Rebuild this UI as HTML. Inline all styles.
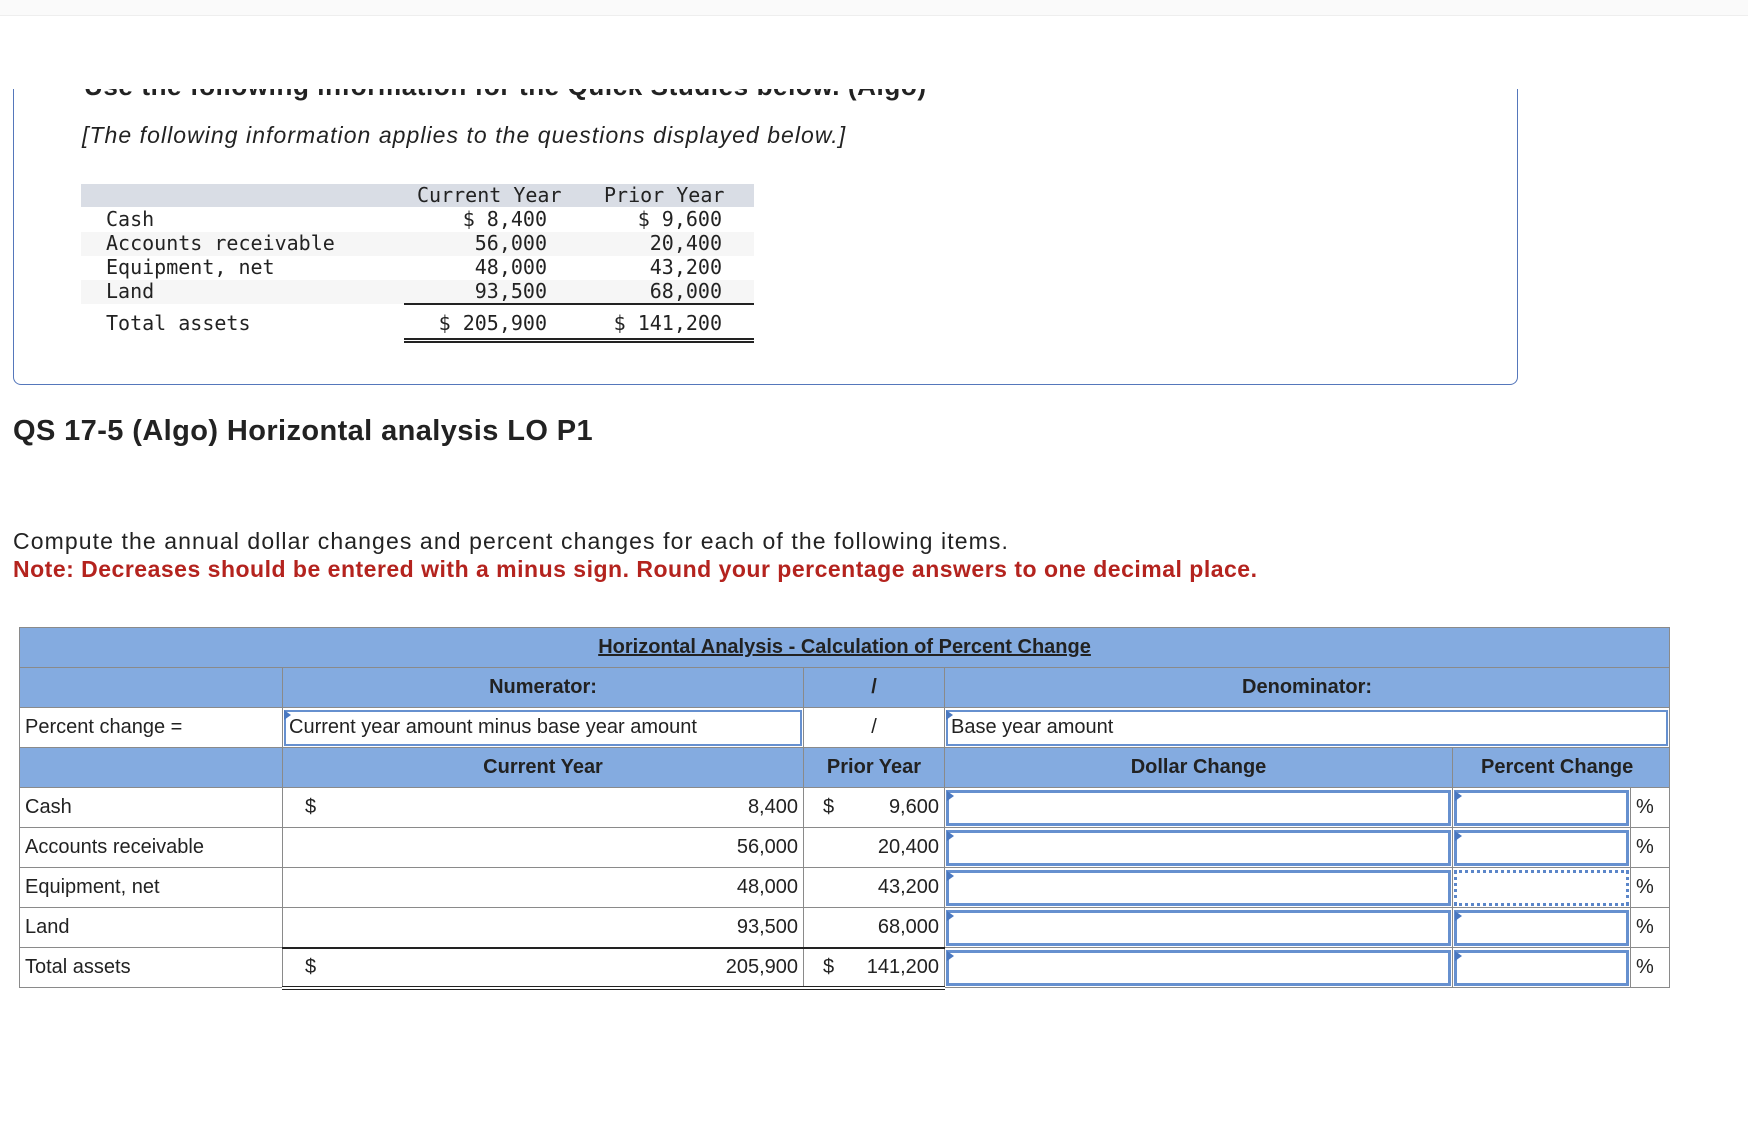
<!DOCTYPE html>
<html><head><meta charset="utf-8"><style>
*{margin:0;padding:0;box-sizing:border-box}
body{width:1748px;height:1134px;background:#fff;position:relative;overflow:hidden;font-family:"Liberation Sans",Arial,sans-serif;color:#222}
.abs{position:absolute;white-space:nowrap}
.mono{font-family:"DejaVu Sans Mono","Liberation Mono",monospace;font-size:20px;color:#222}
table.h{position:absolute;left:19px;top:627px;border-collapse:collapse;table-layout:fixed;width:1650px;font-size:20px}
table.h td{border:1px solid #8a8a8a;height:40px;padding:0 5px;white-space:nowrap;position:relative}
.b{background:#84abe0;font-weight:bold;text-align:center}
.r{text-align:right}
.inp{position:absolute;left:1px;right:1px;top:2px;bottom:1px;border:3px solid #6690cf;background:#fff}
.inp:before{content:"";position:absolute;left:-2px;top:-2px;border-left:7px solid #4a78c0;border-top:5px solid transparent;border-bottom:5px solid transparent}
.dot{position:absolute;left:1px;right:1px;top:2px;bottom:1px;border:3px dotted #5b86c9}
</style></head><body>
<div class="abs" style="left:0;top:0;width:1748px;height:16px;background:#fafafa;border-bottom:1px solid #eee"></div>
<div class="abs" style="left:13px;top:89px;width:1505px;height:296px;border:1px solid #5577bb;border-top:none;border-radius:0 0 8px 8px;overflow:hidden">
<div class="abs" style="left:70px;top:-18px;font-size:26px;font-weight:bold;color:#222;letter-spacing:0.6px">Use the following information for the Quick Studies below. (Algo)</div>
</div>
<div class="abs" style="left:82px;top:122px;font-size:23px;font-style:italic;color:#222;letter-spacing:1.05px">[The following information applies to the questions displayed below.]</div>
<div class="abs" style="left:81px;top:184px;width:673px;height:23px;background:#d9dde5"></div>
<div class="abs" style="left:81px;top:232px;width:673px;height:24px;background:#f6f6f6"></div>
<div class="abs" style="left:81px;top:280px;width:673px;height:24px;background:#f6f6f6"></div>
<div class="abs mono" style="left:417px;top:183px">Current Year</div>
<div class="abs mono" style="left:604px;top:183px">Prior Year</div>
<div class="abs mono" style="left:106px;top:207px;line-height:24px">Cash<br>Accounts receivable<br>Equipment, net<br>Land</div>
<div class="abs mono" style="right:1201px;top:207px;line-height:24px;text-align:right">$ 8,400<br>56,000<br>48,000<br>93,500</div>
<div class="abs mono" style="right:1026px;top:207px;line-height:24px;text-align:right">$ 9,600<br>20,400<br>43,200<br>68,000</div>
<div class="abs" style="left:404px;top:303px;width:350px;border-top:2px solid #222"></div>
<div class="abs mono" style="left:106px;top:311px">Total assets</div>
<div class="abs mono" style="right:1201px;top:311px">$ 205,900</div>
<div class="abs mono" style="right:1026px;top:311px">$ 141,200</div>
<div class="abs" style="left:404px;top:338px;width:350px;height:5px;border-top:2px solid #222;border-bottom:2px solid #222"></div>
<div class="abs" style="left:13px;top:415px;font-size:29px;font-weight:bold;color:#222;letter-spacing:0.4px">QS 17-5 (Algo) Horizontal analysis LO P1</div>
<div class="abs" style="left:13px;top:528px;font-size:23px;color:#222;letter-spacing:1.1px">Compute the annual dollar changes and percent changes for each of the following items.</div>
<div class="abs" style="left:13px;top:556px;font-size:23px;font-weight:bold;color:#b4231e;letter-spacing:0.5px">Note: Decreases should be entered with a minus sign. Round your percentage answers to one decimal place.</div>
<table class="h">
<colgroup><col style="width:263px"><col style="width:521px"><col style="width:141px"><col style="width:508px"><col style="width:178px"><col style="width:39px"></colgroup>
<tr><td colspan="6" class="b"><u>Horizontal Analysis - Calculation of Percent Change</u></td></tr>
<tr><td class="b"></td><td class="b">Numerator:</td><td class="b">/</td><td colspan="3" class="b">Denominator:</td></tr>
<tr><td>Percent change =</td><td style="padding:0"><div class="inp" style="border-width:2px;padding:4px 3px;font-size:20px">Current year amount minus base year amount</div></td><td style="text-align:center">/</td><td colspan="3" style="padding:0"><div class="inp" style="border-width:2px;padding:4px 3px;font-size:20px">Base year amount</div></td></tr>
<tr><td class="b"></td><td class="b">Current Year</td><td class="b">Prior Year</td><td class="b">Dollar Change</td><td colspan="2" class="b" style="text-align:left;padding-left:28px">Percent Change</td></tr>
<tr><td>Cash</td><td class="r"><span style="float:left;padding-left:17px">$</span>8,400</td><td class="r"><span style="float:left;padding-left:14px">$</span>9,600</td><td><div class="inp"></div></td><td><div class="inp"></div></td><td>%</td></tr>
<tr><td>Accounts receivable</td><td class="r">56,000</td><td class="r">20,400</td><td><div class="inp"></div></td><td><div class="inp"></div></td><td>%</td></tr>
<tr><td>Equipment, net</td><td class="r">48,000</td><td class="r">43,200</td><td><div class="inp"></div></td><td><div class="dot"></div></td><td>%</td></tr>
<tr><td>Land</td><td class="r">93,500</td><td class="r">68,000</td><td><div class="inp"></div></td><td><div class="inp"></div></td><td>%</td></tr>
<tr><td>Total assets</td><td class="r" style="border-top:2px solid #222;border-bottom:4px double #222"><span style="float:left;padding-left:17px">$</span>205,900</td><td class="r" style="border-top:2px solid #222;border-bottom:4px double #222"><span style="float:left;padding-left:14px">$</span>141,200</td><td><div class="inp"></div></td><td><div class="inp"></div></td><td>%</td></tr>
</table>
</body></html>
